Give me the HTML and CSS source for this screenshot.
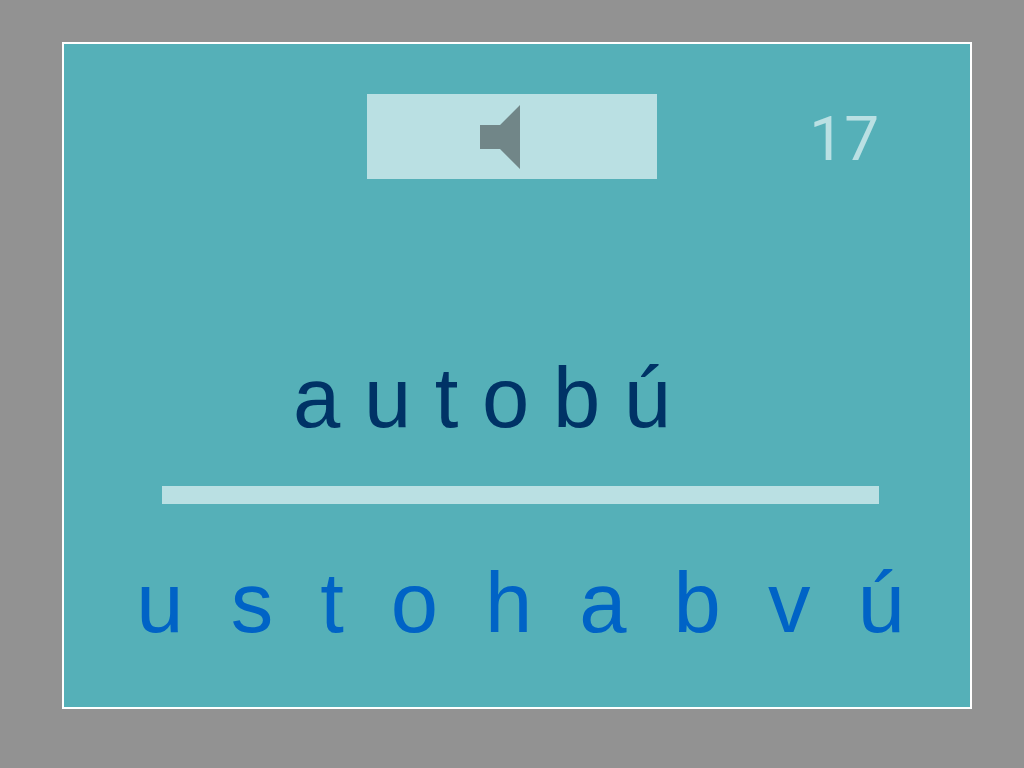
FILE: index.html
```
<!DOCTYPE html>
<html lang="es">
<head>
    <meta charset="UTF-8">
    <meta name="viewport" content="width=device-width, initial-scale=1.0">
    <title>autobús</title>
    <link rel="stylesheet" href="styles.css">
</head>
<body>
    <main class="board">
        <div class="top-row">
            <button class="sound" type="button" aria-label="Escuchar">
                <svg width="40" height="64" viewBox="0 0 40 64" aria-hidden="true">
                    <path d="M0 20H20L40 0V64L20 44H0Z" fill="#718688"/>
                </svg>
            </button>
            <span class="counter">17</span>
        </div>

        <p class="word">a u t o b ú</p>
        <hr class="line">

        <div class="letters">
            <button type="button">u</button>
            <button type="button">s</button>
            <button type="button">t</button>
            <button type="button">o</button>
            <button type="button">h</button>
            <button type="button">a</button>
            <button type="button">b</button>
            <button type="button">v</button>
            <button type="button">ú</button>
        </div>
    </main>
</body>
</html>
```

FILE: styles.css
```
* {
    box-sizing: border-box;
}
body {
    display: flex;
    min-height: 100vh;
    margin: 0;
    padding: 42px 52px 59px 62px;
    font-family: "Liberation Sans", Arial, sans-serif;
    background-color: #929292;
}
.board {
    flex: 1;
    padding: 50px 61px 54px 68px;
    border: 2px solid #fff;
    background-color: #55b0b8;
}
button {
    padding: 0;
    border: none;
    font-family: inherit;
    cursor: pointer;
}
.top-row {
    display: grid;
    grid-template-columns: 12fr 290px 13fr;
    align-items: center;
    margin: 0 30px;
}
.sound {
    grid-column: 2;
    display: flex;
    align-items: center;
    justify-content: center;
    height: 85px;
    padding-right: 24px;
    background-color: #bae0e3;
}
.counter {
    justify-self: end;
    padding-top: 4px;
    font-family: Roboto, "Liberation Sans", sans-serif;
    font-size: 62px;
    line-height: 78px;
    color: #bae0e3;
}
.word {
    margin: 171px 30px 40px;
    padding-left: 131px;
    font-size: 85px;
    line-height: 96px;
    color: #003366;
}
.line {
    height: 18px;
    margin: 0 30px 51px;
    border: none;
    background-color: #bae0e3;
}
.letters {
    display: flex;
    justify-content: center;
    gap: 47px;
}
.letters button {
    font-size: 85px;
    line-height: 96px;
    color: #0063c6;
    background: none;
}
```
